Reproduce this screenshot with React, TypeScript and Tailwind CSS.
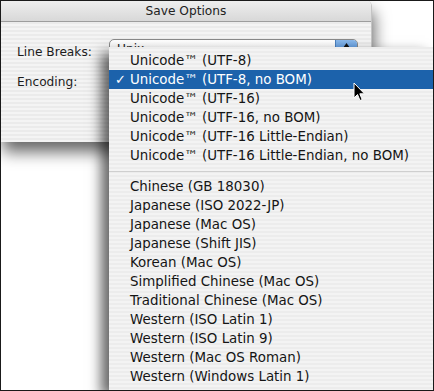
import React from "react";

const group1 = [
  "Unicode™ (UTF-8)",
  "Unicode™ (UTF-8, no BOM)",
  "Unicode™ (UTF-16)",
  "Unicode™ (UTF-16, no BOM)",
  "Unicode™ (UTF-16 Little-Endian)",
  "Unicode™ (UTF-16 Little-Endian, no BOM)",
];
const group2 = [
  "Chinese (GB 18030)",
  "Japanese (ISO 2022-JP)",
  "Japanese (Mac OS)",
  "Japanese (Shift JIS)",
  "Korean (Mac OS)",
  "Simplified Chinese (Mac OS)",
  "Traditional Chinese (Mac OS)",
  "Western (ISO Latin 1)",
  "Western (ISO Latin 9)",
  "Western (Mac OS Roman)",
  "Western (Windows Latin 1)",
];

function Row({ label, selected }: { label: string; selected?: boolean }) {
  return (
    <div
      className={
        selected
          ? "relative h-[19px] flex items-center pl-[21px] bg-[#1c62ab] text-white"
          : "relative h-[19px] flex items-center pl-[21px] text-[#151515]"
      }
    >
      {selected && <span className="absolute left-[6px] text-[13px] leading-none">✓</span>}
      <span className="leading-none">{label}</span>
    </div>
  );
}

export default function App() {
  return (
    <div
      className="relative w-[434px] h-[391px] overflow-hidden bg-white border border-[#1a1a1a]"
      style={{ fontFamily: '"DejaVu Sans", "Liberation Sans", sans-serif' }}
    >
      {/* Window */}
      <div className="absolute left-0 top-0 w-[371px] h-[141px] flex flex-col rounded-tr-[5px] overflow-hidden shadow-[2px_10px_16px_rgba(0,0,0,0.6)] border-r border-[#c4c4c4]">
        <div className="h-[21px] shrink-0 flex items-center justify-center bg-[linear-gradient(#eeeeee,#d8d8d8)] border-b border-[#9d9d9d] text-[12.2px] text-[#222]">
          Save Options
        </div>
        <div className="flex-1 flex flex-col pl-[16px] text-[12.2px] text-[#1c1c1c] bg-[repeating-linear-gradient(180deg,#ebebeb_0px,#ebebeb_2px,#f4f4f4_2px,#f4f4f4_4px)]">
          <div className="mt-[17px] h-[22px] flex items-start">
            <span className="w-[92px] pt-[6px] leading-[14px]">Line Breaks:</span>
            <div className="relative h-[20px] w-[249px] rounded-[5px] border border-[#8a8a8a] bg-[linear-gradient(#ffffff,#f0f0f0)] flex items-start pt-[2px] pl-[7px] overflow-hidden">
              <span className="text-[12.2px] leading-[14px]">Unix</span>
              <div className="absolute right-0 top-0 bottom-0 w-[22px] bg-[linear-gradient(#8ab8ea,#2f78cf)] border-l border-[#4a7fbd] flex justify-center pt-[3px]">
                <svg width="7" height="5" viewBox="0 0 7 5">
                  <path d="M3.5 0 L7 5 L0 5 Z" fill="#111" />
                </svg>
              </div>
            </div>
          </div>
          <div className="mt-[14px] h-[14px] flex items-center">
            <span className="w-[92px] leading-[14px]">Encoding:</span>
          </div>
        </div>
      </div>

      {/* Menu */}
      <div className="absolute left-[108px] top-[46px] right-0 bottom-0 pt-[4px] text-[13.4px] shadow-[-8px_6px_12px_rgba(0,0,0,0.6)] bg-[repeating-linear-gradient(180deg,#ececec_0px,#ececec_2px,#f3f3f3_2px,#f3f3f3_4px)]">
        {group1.map((l, i) => (
          <Row key={l} label={l} selected={i === 1} />
        ))}
        <div className="h-[12px] flex items-center">
          <div className="w-full h-px bg-[#cfcfcf]" />
        </div>
        {group2.map((l) => (
          <Row key={l} label={l} />
        ))}
      </div>

      {/* Cursor */}
      <svg className="absolute left-[352px] top-[81px]" width="13" height="20" viewBox="0 0 13 20">
        <path d="M1 1 L1 16 L4.5 12.5 L7 18.5 L9.2 17.6 L6.8 11.8 L11.5 11.8 Z" fill="#000" stroke="#fff" strokeWidth="1" strokeLinejoin="round" />
      </svg>
    </div>
  );
}
